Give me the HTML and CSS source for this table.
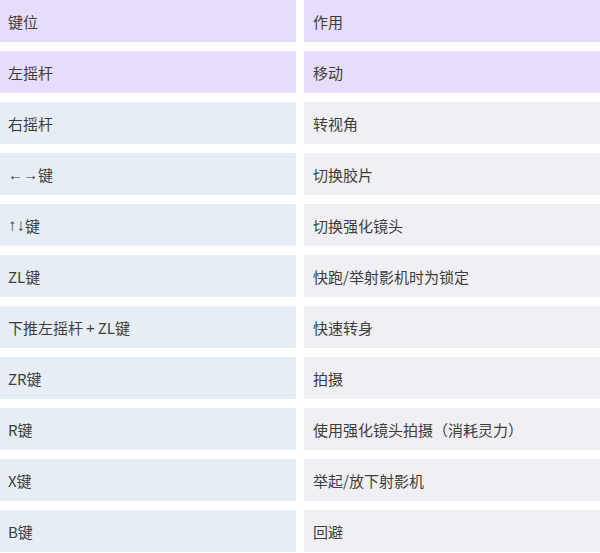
FILE: index.html
```html
<!DOCTYPE html>
<html lang="zh-CN">
<head>
<meta charset="utf-8">
<link rel="stylesheet" href="styles.css">
</head>
<body>
<div class="table">
  <div class="cell head">键位</div><div class="cell head">作用</div>
  <div class="cell head">左摇杆</div><div class="cell head">移动</div>
  <div class="cell key">右摇杆</div><div class="cell act">转视角</div>
  <div class="cell key"><span class="latin">←→</span>键</div><div class="cell act">切换胶片</div>
  <div class="cell key"><span class="latin tall">↑↓</span>键</div><div class="cell act">切换强化镜头</div>
  <div class="cell key">ZL键</div><div class="cell act">快跑/举射影机时为锁定</div>
  <div class="cell key">下推左摇杆<span class="plus">+</span>ZL键</div><div class="cell act">快速转身</div>
  <div class="cell key">ZR键</div><div class="cell act">拍摄</div>
  <div class="cell key">R键</div><div class="cell act">使用强化镜头拍摄（消耗灵力）</div>
  <div class="cell key">X键</div><div class="cell act">举起/放下射影机</div>
  <div class="cell key">B键</div><div class="cell act">回避</div>
</div>
</body>
</html>
```
FILE: styles.css
```css
html, body {
  margin: 0;
  padding: 0;
  background: #ffffff;
}
.table {
  display: grid;
  grid-template-columns: 296px 296px;
  grid-auto-rows: 42px;
  column-gap: 8px;
  row-gap: 9px;
  font-family: "Noto Sans CJK SC", "Noto Sans", sans-serif;
  font-size: 15px;
  color: #3d3d3d;
}
.cell {
  display: flex;
  align-items: center;
  padding-left: 8px;
  white-space: pre;
}
.cell.head {
  background: #e5ddf9;
}
.cell.key {
  background: #e6edf5;
}
.cell.act {
  background: #efeff4;
  padding-left: 9px;
}
.cell.head:nth-child(2n) {
  padding-left: 9px;
}
.latin {
  font-family: "Liberation Sans", sans-serif;
}
.latin.tall {
  font-size: 17px;
  line-height: 1;
}
.plus {
  font-family: "Liberation Sans", sans-serif;
  padding: 0 3px;
}
```
